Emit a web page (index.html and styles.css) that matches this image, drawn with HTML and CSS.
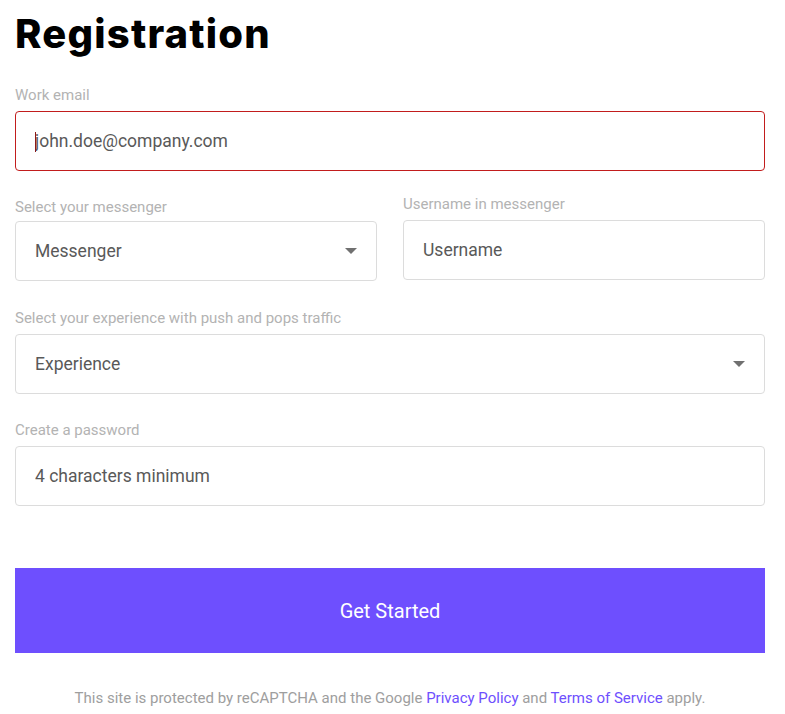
FILE: index.html
```html
<!DOCTYPE html>
<html lang="en">
<head>
<meta charset="utf-8">
<title>Registration</title>
<link rel="stylesheet" href="styles.css">
</head>
<body>
<main class="page">
  <h1 class="title">Registration</h1>
  <form class="form">
    <div class="field field-email">
      <label class="label">Work email</label>
      <div class="control">
        <input class="input input-error" type="text" placeholder="john.doe@company.com">
        <span class="caret"></span>
      </div>
    </div>
    <div class="row">
      <div class="field field-shift">
        <label class="label">Select your messenger</label>
        <div class="control">
          <div class="input select">Messenger</div>
          <span class="arrow"></span>
        </div>
      </div>
      <div class="field">
        <label class="label">Username in messenger</label>
        <div class="control">
          <input class="input" type="text" placeholder="Username">
        </div>
      </div>
    </div>
    <div class="field field-exp">
      <label class="label">Select your experience with push and pops traffic</label>
      <div class="control">
        <div class="input select">Experience</div>
        <span class="arrow"></span>
      </div>
    </div>
    <div class="field">
      <label class="label">Create a password</label>
      <div class="control">
        <input class="input" type="text" placeholder="4 characters minimum">
      </div>
    </div>
    <button class="submit" type="button">Get Started</button>
    <p class="note">This site is protected by reCAPTCHA and the Google <a href="#">Privacy Policy</a> and <a href="#">Terms of Service</a> apply.</p>
  </form>
</main>
</body>
</html>
```
FILE: styles.css
```css
* { box-sizing: border-box; }
html, body { margin: 0; padding: 0; background: #fff; }
body { font-family: Roboto, "Liberation Sans", sans-serif; }
.page { padding: 0 20px 0 15px; }
.title {
  margin: 0;
  padding-top: 10px;
  font-family: Inter, "DejaVu Sans", sans-serif;
  font-weight: 800;
  font-size: 40px;
  line-height: 48px;
  letter-spacing: 1.2px;
  color: #000;
}
.form { display: flex; flex-direction: column; margin-top: 28px; }
.field { display: flex; flex-direction: column; margin-bottom: 28px; }
.field-email { margin-bottom: 24px; }
.field-exp { margin-bottom: 27px; }
.label {
  font-size: 15px;
  line-height: 18px;
  color: #b3b3b3;
  margin-bottom: 7px;
}
.row { display: grid; grid-template-columns: 1fr 1fr; column-gap: 26px; align-items: start; margin-bottom: 28px; }
.row .field { margin-bottom: 0; }
.field-shift { margin-top: 3px; }
.field-shift .label { margin-bottom: 5px; }
.control { position: relative; }
.input {
  display: block;
  width: 100%;
  height: 60px;
  border: 1px solid #dcdcdc;
  border-radius: 4px;
  padding: 0 19px;
  font-family: Roboto, "Liberation Sans", sans-serif;
  font-size: 17.5px;
  color: #595959;
  background: #fff;
  outline: none;
}
.input::placeholder { color: #595959; opacity: 1; }
.select { display: flex; align-items: center; }
.input-error { border-color: #c21d1d; }
.caret {
  position: absolute;
  left: 20px;
  top: 21px;
  width: 1px;
  height: 20px;
  background: #8b1a1a;
}
.arrow {
  position: absolute;
  right: 20px;
  top: 27px;
  width: 0;
  height: 0;
  border-left: 6px solid transparent;
  border-right: 6px solid transparent;
  border-top: 6px solid #707070;
}
.submit {
  margin-top: 34px;
  height: 85px;
  width: 100%;
  border: 0;
  background: #6e4ffe;
  color: #fff;
  font-family: Roboto, "Liberation Sans", sans-serif;
  font-size: 20px;
  cursor: pointer;
}
.note {
  margin: 36px 0 0;
  text-align: center;
  font-size: 15px;
  line-height: 18px;
  color: #9e9e9e;
}
.note a { color: #6e4ffe; text-decoration: none; }
```
